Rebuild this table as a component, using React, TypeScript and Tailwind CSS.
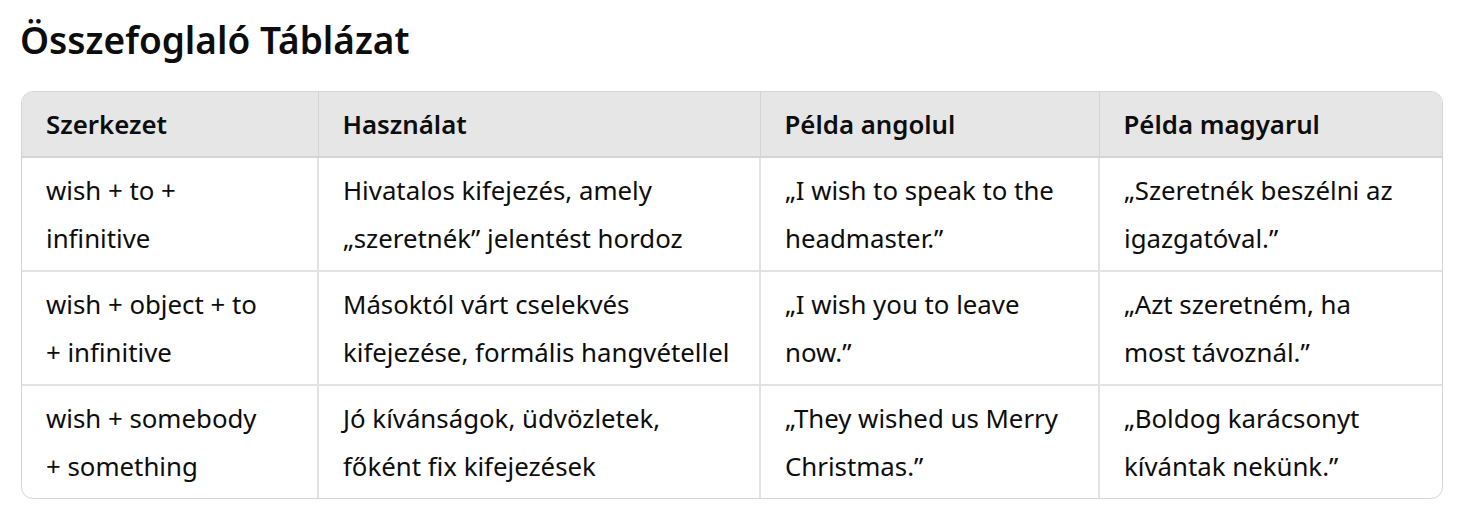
const rows: { cells: string[][] }[] = [
  {
    cells: [
      ["wish + to +", "infinitive"],
      ["Hivatalos kifejezés, amely", "„szeretnék” jelentést hordoz"],
      ["„I wish to speak to the", "headmaster.”"],
      ["„Szeretnék beszélni az", "igazgatóval.”"],
    ],
  },
  {
    cells: [
      ["wish + object + to", "+ infinitive"],
      ["Másoktól várt cselekvés", "kifejezése, formális hangvétellel"],
      ["„I wish you to leave", "now.”"],
      ["„Azt szeretném, ha", "most távoznál.”"],
    ],
  },
  {
    cells: [
      ["wish + somebody", "+ something"],
      ["Jó kívánságok, üdvözletek,", "főként fix kifejezések"],
      ["„They wished us Merry", "Christmas.”"],
      ["„Boldog karácsonyt", "kívántak nekünk.”"],
    ],
  },
];

const headers = ["Szerkezet", "Használat", "Példa angolul", "Példa magyarul"];

export default function App() {
  return (
    <main
      className="min-h-screen bg-white px-[20px] pt-[16px] text-[#0d0d0d]"
      style={{ fontFamily: '"Segoe UI", "Noto Sans", sans-serif' }}
    >
      <h2 className="text-[37px] font-semibold leading-[48px]">Összefoglaló Táblázat</h2>
      <div className="mt-[27px] ml-px w-[1422px] overflow-hidden rounded-[12px] border border-[#d4d4d4]">
        <table className="w-full table-fixed border-collapse text-[25.8px] leading-[48px]">
          <colgroup>
            <col className="w-[296px]" />
            <col className="w-[442px]" />
            <col className="w-[339px]" />
            <col />
          </colgroup>
          <thead className="bg-[#e6e6e6]">
            <tr>
              {headers.map((h, i) => (
                <th
                  key={h}
                  className={`px-[24px] py-[8px] text-left font-semibold border-b-2 border-[#d4d4d4] ${
                    i > 0 ? "border-l" : ""
                  }`}
                >
                  {h}
                </th>
              ))}
            </tr>
          </thead>
          <tbody>
            {rows.map((r, ri) => (
              <tr key={ri} className={ri > 0 ? "border-t-2 border-[#e3e3e3]" : ""}>
                {r.cells.map((c, ci) => (
                  <td
                    key={ci}
                    className={`px-[24px] py-[8px] align-top ${ci > 0 ? "border-l-2 border-[#e3e3e3]" : ""}`}
                  >
                    {c[0]}
                    <br />
                    {c[1]}
                  </td>
                ))}
              </tr>
            ))}
          </tbody>
        </table>
      </div>
    </main>
  );
}
